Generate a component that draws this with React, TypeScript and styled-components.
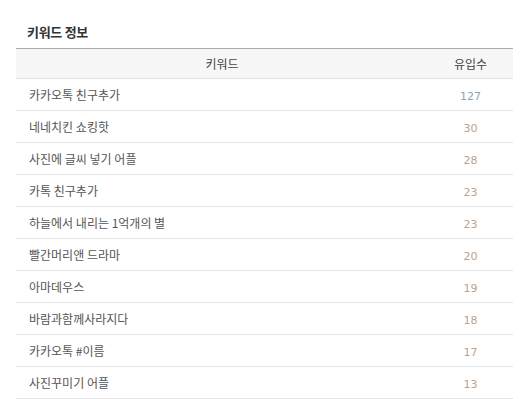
import React from 'react';
import styled, { createGlobalStyle } from 'styled-components';

const GlobalStyle = createGlobalStyle`
  html, body {
    margin: 0;
    padding: 0;
    background: #ffffff;
  }
  body {
    font-family: "Noto Sans CJK KR", "Noto Sans", sans-serif;
  }
`;

const Panel = styled.div`
  width: 521px;
  height: 399px;
  padding: 0 8px 0 16px;
  box-sizing: border-box;
  overflow: hidden;
`;

const Heading = styled.h3`
  margin: 0;
  height: 48px;
  padding: 24px 0 0 11px;
  box-sizing: border-box;
  font-size: 13px;
  line-height: 16px;
  font-weight: 700;
  color: #333333;
  letter-spacing: -0.3px;
`;

const Table = styled.table`
  width: 497px;
  border-collapse: collapse;
  border-top: 1px solid #aaaaaa;
  table-layout: fixed;
`;

const HeadCell = styled.th<{ $width?: number }>`
  width: ${(p) => (p.$width ? `${p.$width}px` : 'auto')};
  height: 29px;
  padding: 0;
  background: #f7f7f7;
  border-bottom: 1px solid #e2e2e2;
  font-size: 12px;
  font-weight: 400;
  color: #444444;
  text-align: center;
`;

const Cell = styled.td<{ $align?: 'left' | 'center' }>`
  height: 31px;
  padding: 0 0 0 ${(p) => (p.$align === 'center' ? '0' : '13px')};
  border-bottom: 1px solid #e6e6e6;
  font-size: 12px;
  color: #555555;
  text-align: ${(p) => p.$align ?? 'left'};
  white-space: nowrap;
`;

const Count = styled.span<{ $top?: boolean }>`
  font-family: "DejaVu Sans", "Liberation Sans", sans-serif;
  font-size: 11px;
  color: ${(p) => (p.$top ? '#94a0b4' : '#b8a393')};
`;

const rows: [string, number][] = [
  ['카카오톡 친구추가', 127],
  ['네네치킨 쇼킹핫', 30],
  ['사진에 글씨 넣기 어플', 28],
  ['카톡 친구추가', 23],
  ['하늘에서 내리는 1억개의 별', 23],
  ['빨간머리앤 드라마', 20],
  ['아마데우스', 19],
  ['바람과함께사라지다', 18],
  ['카카오톡 #이름', 17],
  ['사진꾸미기 어플', 13],
];

export default function App() {
  return (
    <>
      <GlobalStyle />
      <Panel>
        <Heading>키워드 정보</Heading>
        <Table>
          <thead>
            <tr>
              <HeadCell>키워드</HeadCell>
              <HeadCell $width={85}>유입수</HeadCell>
            </tr>
          </thead>
          <tbody>
            {rows.map(([keyword, count], i) => (
              <tr key={keyword}>
                <Cell>{keyword}</Cell>
                <Cell $align="center">
                  <Count $top={i === 0}>{count}</Count>
                </Cell>
              </tr>
            ))}
          </tbody>
        </Table>
      </Panel>
    </>
  );
}
